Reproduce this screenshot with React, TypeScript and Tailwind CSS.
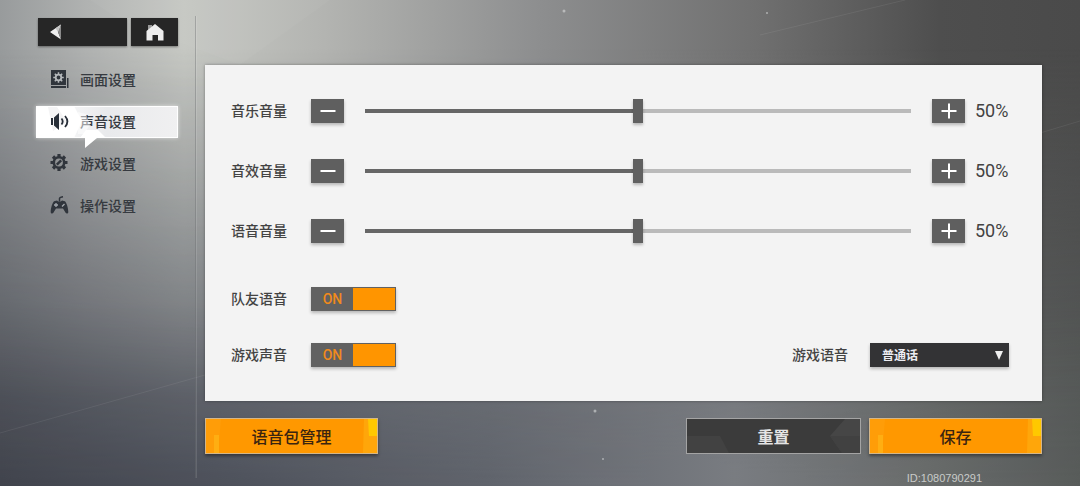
import { useState } from "react";
import type { ReactNode } from "react";

const ScreenIcon = () => (
  <svg viewBox="0 0 20 20" className="size-5" fill="#30353c" aria-hidden="true">
    <path d="M1 0h15v15H1zM1 16h15v2H1zM17 8h1.500v10H17z" />
    <g stroke="#b4b8bb" fill="none">
      <circle cx="8.5" cy="7.500" r="2.800" strokeWidth="1.800" />
      <path
        d="M8.500 2.200v2.500M8.500 10.300v2.500M3.200 7.500h2.500M11.300 7.500h2.500M4.800 3.800l1.600 1.600M10.600 9.600l1.600 1.600M12.200 3.800l-1.600 1.600M6.400 9.600l-1.600 1.600"
        strokeWidth="1.500"
      />
    </g>
  </svg>
);

const SoundIcon = () => (
  <svg viewBox="0 0 20 20" className="size-5" fill="#272e38" aria-hidden="true">
    <path d="M1 6h2v7H1zM4 5.500L9 1v17l-5-4.500z" />
    <path
      d="M11.500 6.500q2.400 3 0 6M15 4q4.800 5.500 0 11"
      fill="none"
      stroke="#272e38"
      strokeWidth="1.800"
    />
  </svg>
);

const GearIcon = () => (
  <svg viewBox="0 0 20 20" className="size-5" fill="none" stroke="#30353c" aria-hidden="true">
    <circle cx="9" cy="8.500" r="5.200" strokeWidth="2.600" />
    <path
      d="M9 0v3M9 14v3M.5 8.500h3M14.500 8.500h3M3 2.500l2 2M13 12.500l2 2M15 2.500l-2 2M5 12.500l-2 2"
      strokeWidth="3.200"
    />
    <path d="M6.800 10.700l4.400-4.400" strokeWidth="2.400" />
  </svg>
);

const GamepadIcon = () => (
  <svg viewBox="0 0 20 20" className="size-5" fill="#30353c" aria-hidden="true">
    <path d="M4 5.200l3-.7 1.200 1h2.600l1.200-1 3 .7c1.500 1.500 3.300 6.500 3.300 10.800 0 1.800-2 2-2.700.8l-2.600-4.300H6l-2.600 4.300C2.700 18 .7 17.800.7 16 .7 11.700 2.500 6.700 4 5.200z" />
    <path d="M9.500 5.500V2.500q0-1.300 3.500-1.800" fill="none" stroke="#30353c" strokeWidth="1.500" />
    <path d="M6 7v4M4 9h4M12 10.500L14.500 8" stroke="#a4a8ad" strokeWidth="1.300" />
  </svg>
);

const menu: { label: string; icon: ReactNode }[] = [
  { label: "画面设置", icon: <ScreenIcon /> },
  { label: "声音设置", icon: <SoundIcon /> },
  { label: "游戏设置", icon: <GearIcon /> },
  { label: "操作设置", icon: <GamepadIcon /> },
];

const Background = () => (
  <svg
    className="absolute inset-0 -z-10 size-full"
    viewBox="0 0 1080 486"
    preserveAspectRatio="none"
    aria-hidden="true"
  >
    <defs>
      <linearGradient id="top">
        <stop offset="0" stopColor="#989b9c" />
        <stop offset=".08" stopColor="#b0b2b1" />
        <stop offset=".17" stopColor="#c6c8c3" />
        <stop offset=".3" stopColor="#b3b4b1" />
        <stop offset=".5" stopColor="#8d8e8f" />
        <stop offset=".7" stopColor="#707070" />
        <stop offset=".87" stopColor="#4e4e4e" />
        <stop offset="1" stopColor="#4a4a4a" />
      </linearGradient>
      <linearGradient id="bottom">
        <stop offset="0" stopColor="#3f4148" />
        <stop offset=".2" stopColor="#4c4f57" />
        <stop offset=".45" stopColor="#606369" />
        <stop offset=".68" stopColor="#7b7d80" />
        <stop offset=".85" stopColor="#6b6d6a" />
        <stop offset="1" stopColor="#585b57" />
      </linearGradient>
      <linearGradient id="fade" x2="0" y2="1">
        <stop offset=".1" stopColor="#000" />
        <stop offset=".41" stopColor="#505050" />
        <stop offset=".62" stopColor="#8a8a8a" />
        <stop offset=".82" stopColor="#dadada" />
        <stop offset="1" stopColor="#fff" />
      </linearGradient>
      <mask id="lower">
        <path d="M0 0h1080v486H0z" fill="url(#fade)" />
      </mask>
    </defs>
    <path d="M0 0h1080v486H0z" fill="url(#top)" />
    <path d="M0 0h1080v486H0z" fill="url(#bottom)" mask="url(#lower)" />
    <path d="M0 0h1080v486H0z" fill="#5a6a90" opacity=".06" mask="url(#lower)" />
    <path d="M90 0h240L240 65 120 20z" fill="#fff" opacity=".03" />
    <path d="M760 35L905 0M1040 133l40-12M0 433l205-58" stroke="#fff" opacity=".07" fill="none" />
    <g fill="#d8dada" opacity=".6">
      <circle cx="564" cy="11" r="1.500" />
      <circle cx="595" cy="411" r="1.500" />
      <circle cx="767" cy="13" r="1" />
      <circle cx="603" cy="459" r="1" />
    </g>
  </svg>
);

const VolumeRow = ({ label, id }: { label: string; id: string }) => {
  const [value, setValue] = useState(50);
  const stepButton =
    "flex h-6 w-[33px] shrink-0 items-center justify-center bg-[#5f5f5f] shadow-[0_2px_3px_rgba(0,0,0,0.25)]";
  return (
    <div className="flex h-7 items-center">
      <label htmlFor={id} className="w-20 shrink-0 pb-0.5">
        {label}
      </label>
      <button
        className={stepButton}
        aria-label={`${label} -`}
        onClick={() => setValue(Math.max(0, value - 1))}
      >
        <svg viewBox="0 0 16 16" className="size-4" stroke="#fff" strokeWidth="2">
          <path d="M.5 8h15" />
        </svg>
      </button>
      <input
        id={id}
        type="range"
        value={value}
        onChange={(e) => setValue(Number(e.target.value))}
        style={{
          backgroundImage: `linear-gradient(to right, #666 ${value}%, #bababa ${value}%)`,
        }}
        className="mx-[21px] h-1 min-w-0 flex-1 appearance-none [&::-webkit-slider-thumb]:h-6 [&::-webkit-slider-thumb]:w-[10px] [&::-webkit-slider-thumb]:appearance-none [&::-webkit-slider-thumb]:bg-[#606060] [&::-webkit-slider-thumb]:shadow-[0_2px_3px_rgba(0,0,0,0.25)]"
      />
      <button
        className={stepButton}
        aria-label={`${label} +`}
        onClick={() => setValue(Math.min(100, value + 1))}
      >
        <svg viewBox="0 0 16 16" className="size-4" stroke="#fff" strokeWidth="2">
          <path d="M.5 8h15M8 .5v15" />
        </svg>
      </button>
      <span className="w-11 shrink-0 pl-[10px] font-[Roboto,sans-serif] text-lg leading-none font-normal text-[#434343]">
        {value}%
      </span>
    </div>
  );
};

const Toggle = ({ label, id }: { label: string; id: string }) => {
  const [on, setOn] = useState(true);
  return (
    <div className="flex h-7 items-center">
      <label htmlFor={id} className="w-20 shrink-0 pb-0.5">
        {label}
      </label>
      <label className="relative flex h-6 w-[85px] cursor-pointer items-center bg-[#616161] p-px shadow-[0_2px_3px_rgba(0,0,0,0.25)]">
        <input
          id={id}
          type="checkbox"
          checked={on}
          onChange={() => setOn(!on)}
          className="absolute inset-0 size-full appearance-none"
        />
        <span className="flex-1 text-center font-[Roboto,sans-serif] text-sm leading-none text-[#f08a1c]">
          {on ? "ON" : "OFF"}
        </span>
        <span
          className={`h-full w-[42px] ${on ? "bg-[#ff9500]" : "-order-1 bg-[#a0a0a0]"}`}
        ></span>
      </label>
    </div>
  );
};

const OrangeButton = ({ children }: { children: ReactNode }) => (
  <button className="relative h-9 w-[173px] border border-[#d3b68a] bg-[#ff9800] text-base leading-none font-medium text-[#3a2410] shadow-[0_2px_3px_rgba(0,0,0,0.4)]">
    <svg
      viewBox="0 0 171 34"
      preserveAspectRatio="none"
      className="absolute inset-0 size-full"
      aria-hidden="true"
    >
      <path d="M0 0h15l-3 34H0z" fill="#ff9d08" />
      <path d="M8 16h5v18H8z" fill="#ffae12" />
      <path d="M158 0h13v34h-14z" fill="#ffa60a" />
      <path d="M162 0h9v17h-8z" fill="#ffc800" />
    </svg>
    <span className="relative">{children}</span>
  </button>
);

const App = () => {
  const [active, setActive] = useState("声音设置");
  return (
    <div className="relative isolate flex min-h-screen overflow-hidden pr-[38px] pl-9 font-['Noto_Sans_CJK_SC',sans-serif] text-sm font-medium text-[#434343]">
      <Background />
      <aside className="w-[142px] shrink-0 pt-[18px]">
        <div className="flex gap-1 pl-0.5">
          <button
            aria-label="返回"
            className="flex h-7 flex-1 items-center bg-[#262626] pl-3 shadow-[0_1px_2px_rgba(0,0,0,0.4)]"
          >
            <svg viewBox="0 0 11 16" className="h-4 w-[11px]">
              <path d="M0 8L11 .5 8 8l3 7.500z" fill="#f0f0f0" />
              <path d="M11 .5L8 8l3 7.500z" fill="#8a8a8a" />
              <path d="M5.500 4.300L11 .5 8 8z" fill="#c4c4c4" />
            </svg>
          </button>
          <button
            aria-label="主页"
            className="flex h-7 w-[47px] items-center justify-center bg-[#262626] shadow-[0_1px_2px_rgba(0,0,0,0.4)]"
          >
            <svg viewBox="0 0 18 18" className="size-[18px]">
              <path d="M2 2h4v5H2z" fill="#999" />
              <path d="M9 1l8.500 7v9.500h-5.500V12H6.500v5.500H.5V8z" fill="#eee" />
            </svg>
          </button>
        </div>
        <nav className="mt-[18px] flex flex-col gap-[10px]">
          {menu.map((item) => (
            <button
              key={item.label}
              onClick={() => setActive(item.label)}
              className={`relative flex h-8 items-center gap-[10px] pl-[14px] text-[#363a40] ${
                item.label === active
                  ? "bg-linear-to-r from-white via-[#e9eaec] to-[#f0f0f1] shadow-[0_0_4px_rgba(255,255,255,0.6)] inset-ring inset-ring-white"
                  : ""
              }`}
            >
              {item.label === active && (
                <svg
                  viewBox="0 0 142 42"
                  className="absolute top-0 left-0 h-[42px] w-[142px]"
                  aria-hidden="true"
                >
                  <path d="M0 0h38l8 15-8 17H0z" fill="#fff" />
                  <path d="M12 1h9l10 15-14 9z" fill="#f4f4f5" />
                  <path d="M44 32l6-8h12l8 8h-9L49 42V32z" fill="#fff" />
                </svg>
              )}
              <span className="relative">{item.icon}</span>
              <span className="relative pb-0.5">{item.label}</span>
              {item.label === active && (
                <svg
                  viewBox="0 0 32 32"
                  className="absolute top-0 left-9 size-8"
                  aria-hidden="true"
                >
                  <path d="M6 6l8 2 4 11-6 9H6z" fill="#fff" opacity=".5" />
                </svg>
              )}
            </button>
          ))}
        </nav>
      </aside>
      <div className="mt-4 mr-[9px] mb-2 ml-[17px] w-px shrink-0 bg-[#6b6e70]/40 shadow-[1px_0_0_rgba(255,255,255,0.12)]"></div>
      <main className="flex min-w-0 flex-1 flex-col pt-[65px]">
        <section className="flex flex-col bg-[#f3f3f3] py-8 pr-[33px] pl-[26px] shadow-[0_0_3px_rgba(0,0,0,0.35)]">
          <div className="flex flex-col gap-8">
            <VolumeRow id="music" label="音乐音量" />
            <VolumeRow id="effect" label="音效音量" />
            <VolumeRow id="voice" label="语音音量" />
          </div>
          <div className="mt-10 flex items-end justify-between">
            <div className="flex flex-col gap-7">
              <Toggle id="teammate" label="队友语音" />
              <Toggle id="sound" label="游戏声音" />
            </div>
            <div className="flex h-7 items-center gap-[22px]">
              <label htmlFor="language" className="pb-0.5">
                游戏语音
              </label>
              <div className="relative">
                <select
                  id="language"
                  className="block h-6 w-[139px] appearance-none bg-[#333335] px-3 text-xs leading-none font-bold text-[#ececf2] shadow-[0_2px_3px_rgba(0,0,0,0.25)]"
                >
                  <option>普通话</option>
                </select>
                <svg
                  viewBox="0 0 8 9"
                  className="pointer-events-none absolute top-2 right-[6px] h-[9px] w-2"
                  aria-hidden="true"
                >
                  <path d="M0 0h8L4 9z" fill="#f0f0f0" />
                </svg>
              </div>
            </div>
          </div>
        </section>
        <div className="flex justify-between pt-[17px]">
          <OrangeButton>语音包管理</OrangeButton>
          <div className="flex gap-2">
            <button className="relative h-9 w-[175px] border border-[#a4a4a4] bg-[#3b3b3b] text-base leading-none font-bold text-[#e4e4e4]">
              <svg
                viewBox="0 0 173 34"
                preserveAspectRatio="none"
                className="absolute inset-0 size-full"
                aria-hidden="true"
              >
                <path d="M0 17h33l9 17H0z" fill="#424242" />
                <path d="M143 17L158 0h15v34h-18z" fill="#464646" />
                <path d="M143 17h30v17h-18z" fill="#414141" />
              </svg>
              <span className="relative">重置</span>
            </button>
            <OrangeButton>保存</OrangeButton>
          </div>
        </div>
        <p className="mt-auto self-end pr-[60px] font-['Liberation_Sans',sans-serif] text-[11px] leading-4 font-normal text-[#c9cbc9]">
          ID:1080790291
        </p>
      </main>
    </div>
  );
};

export default App;
